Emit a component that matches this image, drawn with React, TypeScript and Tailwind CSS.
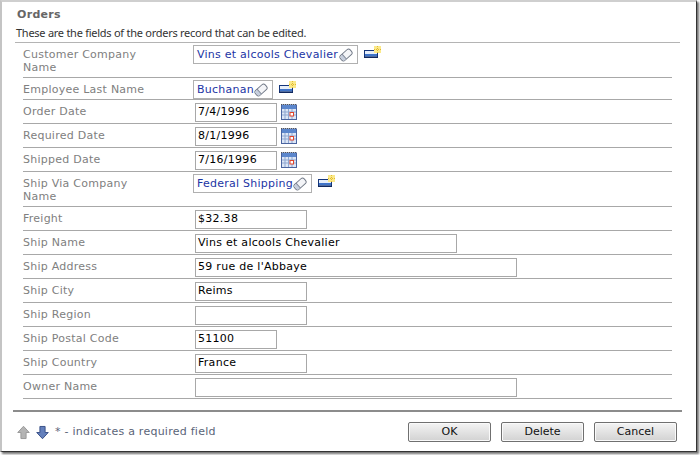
function Eraser() {
  return (
    <svg width="14" height="14" viewBox="0 0 15 15" className="shrink-0">
      <g transform="rotate(-42 7.5 7.5)">
        <rect x="0.5" y="4" width="14" height="7" rx="2.5" fill="#f4f5f8" stroke="#6f7785" strokeWidth="1" />
        <path d="M5 4.5 V10.5 H3 Q1 10.5 1 8.5 V6.5 Q1 4.5 3 4.5Z" fill="#c6cedd" />
        <path d="M5 4 V11" stroke="#7f8796" strokeWidth="1" />
      </g>
    </svg>
  );
}
function NewIcon() {
  return (
    <svg width="17" height="13" viewBox="0 0 17 13" className="shrink-0">
      <rect x="0.5" y="4.5" width="13" height="7" fill="#e6eefa" stroke="#15357a" />
      <rect x="1" y="8" width="12" height="2.5" fill="#3f74c8" />
      <rect x="0" y="10.5" width="14" height="1.5" fill="#10285e" />
      <rect x="10" y="0" width="7" height="7" fill="#fbe98a" />
      <path d="M13.5 0 V7 M10 3.5 H17" stroke="#e3bb2e" strokeWidth="1" strokeDasharray="1 1" />
    </svg>
  );
}
function Calendar() {
  return (
    <svg width="16" height="16" viewBox="0 0 16 16" className="shrink-0">
      <rect x="0.5" y="1" width="15" height="14.5" fill="#dce6f6" stroke="#4a64a0" />
      <path d="M0 .5 H16" stroke="#555" strokeWidth="1" strokeDasharray="1 1" />
      <rect x="1" y="1" width="14" height="4" fill="#5b86cc" />
      <path d="M1 8 H15 M1 11 H15 M4 5 V15 M7.5 5 V15 M11 5 V15" stroke="#8ea6d0" strokeWidth="1" />
      <rect x="9" y="8.5" width="3.5" height="3.5" fill="#fff" stroke="#e0452c" />
    </svg>
  );
}
function Arrow({ up, color, stroke }: { up?: boolean; color: string; stroke: string }) {
  return (
    <svg width="13" height="15" viewBox="0 0 14 15" className="shrink-0">
      <path d={up ? "M7 .8 L13.2 7.5 H9.8 V14 H4.2 V7.5 H.8Z" : "M7 14.2 L13.2 7.5 H9.8 V1 H4.2 V7.5 H.8Z"} fill={color} stroke={stroke} strokeWidth="1" />
    </svg>
  );
}

function Lookup({ text, w }: { text: string; w: string }) {
  return (
    <div className="flex items-start gap-[6px]">
      <div className={`flex h-[19px] items-center justify-between border border-[#b0b0b0] pr-[4px] pl-[3px] tracking-[0.25px] text-[#1c35a4] ${w}`}>
        <span className="pt-[1px] whitespace-nowrap">{text}</span>
        <Eraser />
      </div>
      <div className="pt-[1px]"><NewIcon /></div>
    </div>
  );
}

function Field({ value, w }: { value: string; w: string }) {
  return (
    <div className={`mt-[1px] ml-[2px] flex h-[19px] items-center border border-[#a8a8a8] pl-[2px] tracking-[0.28px] whitespace-nowrap text-black ${w}`}>
      {value}
    </div>
  );
}

function DateField({ value }: { value: string }) {
  return (
    <div className="flex items-center gap-[4px]">
      <Field value={value} w="w-[82px]" />
      <Calendar />
    </div>
  );
}

function Row({ label, h, children }: { label: string; h: string; children: React.ReactNode }) {
  return (
    <div className={`flex border-b border-[#a8a8a8] ${h}`}>
      <div className="w-[170px] pt-[5px] pr-[45px] leading-[13px] tracking-[0.25px] text-[#808080]">{label}</div>
      <div className="pt-[2px]">{children}</div>
    </div>
  );
}

function Btn({ label }: { label: string }) {
  return (
    <div className="flex h-[20px] w-[83px] items-center justify-center rounded-[2px] border border-[#707070] bg-gradient-to-b from-[#f4f4f4] to-[#d2d2d2] text-[#111] shadow-[inset_0_0_0_1px_#fafafa]">
      {label}
    </div>
  );
}

export default function App() {
  return (
    <div className="h-[455px] w-[700px] overflow-hidden bg-white font-['DejaVu_Sans',sans-serif] text-[11px]">
      <div className="h-[452px] w-[697px] border-t-2 border-r border-b border-l-2 border-t-[#cfcfcf] border-r-[#333] border-b-[#333] border-l-[#c4c4c4] pt-[6px] shadow-[2px_2px_2px_rgba(0,0,0,0.55)]">
        <div className="pl-[15px] leading-[14px] font-bold tracking-[0.3px] text-[#666]">Orders</div>
        <div className="pt-[4px] pl-[14px] font-['Noto_Sans',sans-serif] leading-[14px] tracking-[-0.26px] whitespace-nowrap text-[#333]">These are the fields of the orders record that can be edited.</div>
        <div className="mt-[2px] ml-[13px] w-[665px] border-b border-[#b4b4b4]" />
        <div className="ml-[21px] w-[649px]">
          <Row label="Customer Company Name" h="h-[35px]">
            <Lookup text="Vins et alcools Chevalier" w="w-[165px]" />
          </Row>
          <Row label="Employee Last Name" h="h-[22px]">
            <Lookup text="Buchanan" w="w-[80px]" />
          </Row>
          <Row label="Order Date" h="h-[24px]"><DateField value="7/4/1996" /></Row>
          <Row label="Required Date" h="h-[24px]"><DateField value="8/1/1996" /></Row>
          <Row label="Shipped Date" h="h-[24px]"><DateField value="7/16/1996" /></Row>
          <Row label="Ship Via Company Name" h="h-[35px]">
            <Lookup text="Federal Shipping" w="w-[119px]" />
          </Row>
          <Row label="Freight" h="h-[24px]"><Field value="$32.38" w="w-[112px]" /></Row>
          <Row label="Ship Name" h="h-[24px]"><Field value="Vins et alcools Chevalier" w="w-[262px]" /></Row>
          <Row label="Ship Address" h="h-[24px]"><Field value="59 rue de l'Abbaye" w="w-[322px]" /></Row>
          <Row label="Ship City" h="h-[24px]"><Field value="Reims" w="w-[112px]" /></Row>
          <Row label="Ship Region" h="h-[24px]"><Field value="" w="w-[112px]" /></Row>
          <Row label="Ship Postal Code" h="h-[24px]"><Field value="51100" w="w-[82px]" /></Row>
          <Row label="Ship Country" h="h-[24px]"><Field value="France" w="w-[112px]" /></Row>
          <Row label="Owner Name" h="h-[24px]"><Field value="" w="w-[322px]" /></Row>
        </div>
        <div className="mt-[11px] ml-[11px] w-[669px] border-b-2 border-[#8c8c8c]" />
        <div className="mt-[10px] ml-[15px] flex w-[660px] items-center justify-between">
          <div className="flex items-center gap-[6px]">
            <Arrow up color="#b4b4b4" stroke="#969696" />
            <Arrow color="#6480bc" stroke="#344c84" />
            <span className="tracking-[0.25px] text-[#5a6478]">* - indicates a required field</span>
          </div>
          <div className="flex gap-[10px]">
            <Btn label="OK" />
            <Btn label="Delete" />
            <Btn label="Cancel" />
          </div>
        </div>
      </div>
    </div>
  );
}
